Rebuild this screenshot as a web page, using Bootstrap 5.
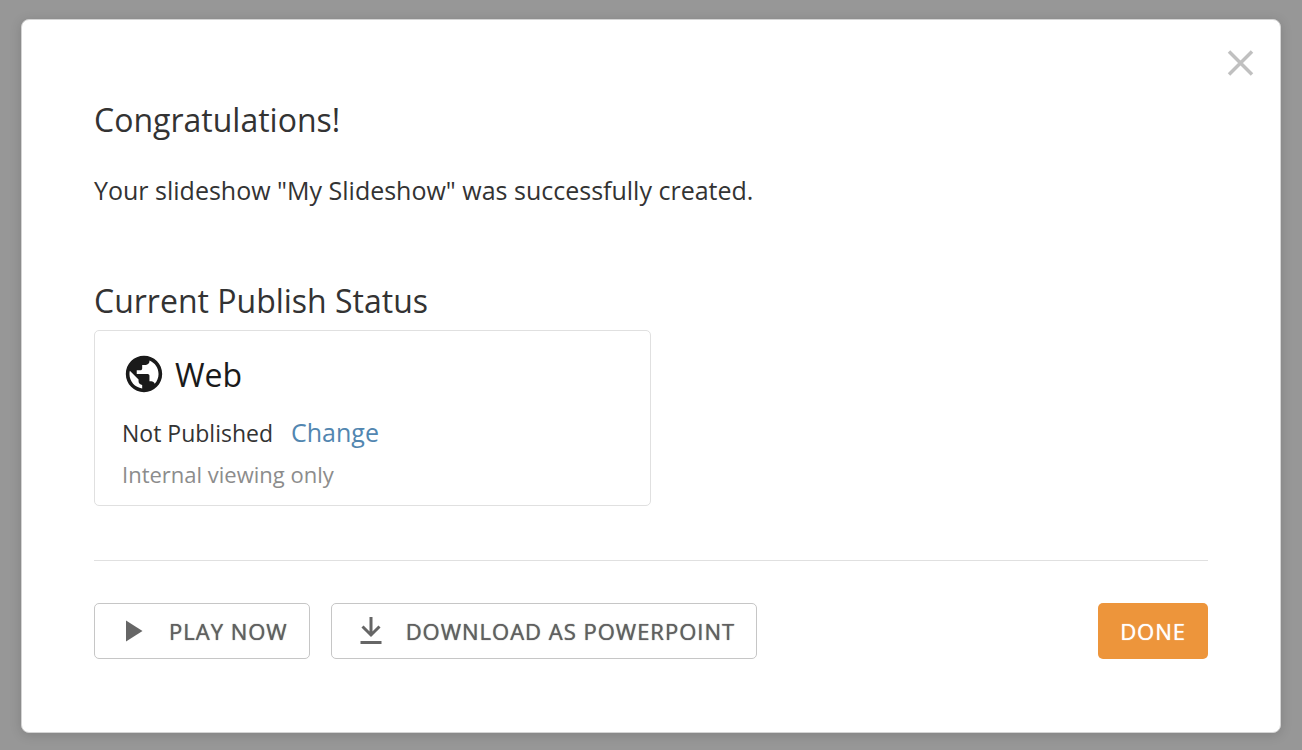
<!DOCTYPE html>
<html lang="en">
<head>
<meta charset="utf-8">
<meta name="viewport" content="width=device-width, initial-scale=1">
<title>Slideshow created</title>
<link href="https://cdn.jsdelivr.net/npm/bootstrap@5.3.0/dist/css/bootstrap.min.css" rel="stylesheet">
<style>
body { font-family: "Open Sans", sans-serif; background: #979797; color: #333; min-height: 100vh; padding: 19px 21px 17px; }
.dialog-panel { background: #fff; border: 1px solid #d4d4d4; border-radius: 8px; padding: 78px 72px 73px; box-shadow: 0 2px 12px rgba(0,0,0,.15); }
.close-x { top: 27px; right: 24px; width: 32px; height: 32px; }
.heading-lg { font-size: 32px; line-height: 44px; }
.message { font-size: 25px; line-height: 34px; margin-top: 31px; }
.status-title { margin-top: 72px; }
.status-card { width: 557px; max-width: 100%; border: 1px solid #e0e0e0; border-radius: 5px; padding: 22px 27px 15px; margin-top: 7px; }
.web-title { color: #1a1a1a; gap: 11px; padding-left: 2px; }
.web-title svg { margin-bottom: 2px; }
.status-line { font-size: 23px; line-height: 34px; margin-top: 18px; gap: 18px; }
.status-line a { font-size: 25px; color: #5286b0; }
.hint { font-size: 22px; line-height: 32px; color: #8c8c8c; margin-top: 8px; }
.rule { height: 1px; background: #e0e0e0; margin: 54px 0 42px; }
.actions { gap: 21px; }
.action { height: 56px; border-radius: 5px; font-size: 22px; font-weight: 500; letter-spacing: 1px; line-height: 30px; padding: 0 22px; text-shadow: 0 0 1px currentColor; }
.action-outline { border: 1px solid #c6c6c6; color: #606060; background: #fff; gap: 19px; padding: 0 21px; }
.action-done { background: #ed953b; color: #fff; border: 0; }
</style>
</head>
<body>
<main class="dialog-panel position-relative" role="dialog" aria-labelledby="title">
  <button type="button" class="close-x btn p-0 border-0 position-absolute d-flex" aria-label="Close">
    <svg width="32" height="32" viewBox="0 0 32 32" fill="none" stroke="#c0c0c0" stroke-width="3.500"><path d="M5 4.500 28 27.500M28 4.500 5 27.500"/></svg>
  </button>
  <h1 id="title" class="heading-lg fw-normal mb-0">Congratulations!</h1>
  <p class="message mb-0">Your slideshow "My Slideshow" was successfully created.</p>
  <h2 class="heading-lg status-title fw-normal mb-0">Current Publish Status</h2>
  <section class="status-card">
    <h3 class="heading-lg web-title d-flex align-items-center fw-normal mb-0">
      <svg width="40" height="40" viewBox="1 1 22 22" fill="currentColor" aria-hidden="true"><path d="M12 2C6.480 2 2 6.480 2 12s4.480 10 10 10 10-4.480 10-10S17.520 2 12 2zm-1 17.930c-3.950-.490-7-3.850-7-7.930 0-.620.080-1.210.210-1.790L9 15v1c0 1.100.900 2 2 2v1.930zm6.900-2.540c-.260-.810-1-1.390-1.900-1.390h-1v-3c0-.550-.450-1-1-1H8v-2h2c.550 0 1-.450 1-1V7h2c1.100 0 2-.900 2-2v-.410c2.930 1.190 5 4.060 5 7.410 0 2.080-.800 3.970-2.100 5.390z"/></svg>
      <span>Web</span>
    </h3>
    <div class="status-line d-flex align-items-baseline"><span>Not Published</span><a href="#" class="text-decoration-none">Change</a></div>
    <div class="hint">Internal viewing only</div>
  </section>
  <div class="rule"></div>
  <div class="d-flex flex-wrap justify-content-between gap-3">
    <div class="actions d-flex flex-wrap">
      <button type="button" class="btn action action-outline d-flex align-items-center">
        <svg width="34" height="34" viewBox="0 0 34 34" fill="#666" aria-hidden="true"><path d="M10 6.500v21l16.500-10.500z"/></svg><span>PLAY NOW</span>
      </button>
      <button type="button" class="btn action action-outline d-flex align-items-center">
        <svg width="34" height="34" viewBox="0 0 34 34" fill="none" stroke="#666" stroke-width="3" aria-hidden="true"><path d="M18 3v17M9.500 12.500l8.500 8.500 8.500-8.500M7.500 28.500h21"/></svg><span>DOWNLOAD AS POWERPOINT</span>
      </button>
    </div>
    <button type="button" class="btn action action-done">DONE</button>
  </div>
</main>
<script src="https://cdn.jsdelivr.net/npm/bootstrap@5.3.0/dist/js/bootstrap.bundle.min.js"></script>
</body>
</html>
